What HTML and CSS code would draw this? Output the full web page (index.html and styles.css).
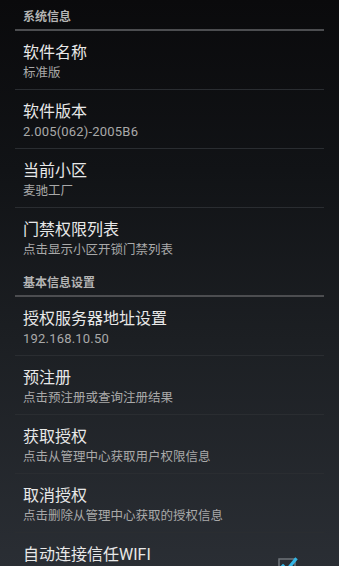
FILE: index.html
```html
<!DOCTYPE html>
<html lang="zh-CN">
<head>
<meta charset="utf-8">
<title>设置</title>
<link rel="stylesheet" href="styles.css">
</head>
<body>
<div class="screen">
  <div class="list">
    <div class="header">系统信息</div>
    <div class="item">
      <div class="title">软件名称</div>
      <div class="summary">标准版</div>
    </div>
    <div class="item">
      <div class="title">软件版本</div>
      <div class="summary latin">2.005(062)-2005B6</div>
    </div>
    <div class="item">
      <div class="title">当前小区</div>
      <div class="summary">麦驰工厂</div>
    </div>
    <div class="item last">
      <div class="title">门禁权限列表</div>
      <div class="summary">点击显示小区开锁门禁列表</div>
    </div>
    <div class="header">基本信息设置</div>
    <div class="item">
      <div class="title">授权服务器地址设置</div>
      <div class="summary latin">192.168.10.50</div>
    </div>
    <div class="item">
      <div class="title">预注册</div>
      <div class="summary">点击预注册或查询注册结果</div>
    </div>
    <div class="item">
      <div class="title">获取授权</div>
      <div class="summary">点击从管理中心获取用户权限信息</div>
    </div>
    <div class="item">
      <div class="title">取消授权</div>
      <div class="summary">点击删除从管理中心获取的授权信息</div>
    </div>
    <div class="item check-item">
      <div class="title">自动连接信任WIFI</div>
      <svg class="checkbox" width="32" height="32" viewBox="0 0 32 32" aria-hidden="true">
        <rect x="5" y="9" width="16" height="16" fill="none" stroke="#6f7479" stroke-width="1.5"/>
        <path d="M9 16 L13 20 L21.5 9.5" fill="none" stroke="#33b5e5" stroke-width="3.2" stroke-linecap="square"/>
      </svg>
    </div>
  </div>
</div>
</body>
</html>
```

FILE: styles.css
```css
html, body {
  margin: 0;
  padding: 0;
}
body {
  width: 339px;
  height: 566px;
  overflow: hidden;
  font-family: Roboto, "Noto Sans CJK SC", "Noto Sans", sans-serif;
}
.screen {
  width: 339px;
  height: 566px;
  background: linear-gradient(180deg, #0a0a0c 0%, #111316 30%, #1c1f23 60%, #2a2e34 100%);
  overflow: hidden;
}
.list {
  margin: 0 15px;
}
.header {
  padding: 9px 8px 4px;
  height: 16px;
  line-height: 16px;
  font-size: 12px;
  font-weight: bold;
  color: #b4b4b4;
  border-bottom: 2px solid #4c4d50;
}
.item {
  padding: 11px 8px 7px;
  height: 40px;
  border-bottom: 1px solid #2a2d31;
}
.item.last {
  border-bottom: none;
}
.title {
  font-size: 16px;
  line-height: 22px;
  color: #e8e8e8;
  white-space: nowrap;
}
.summary {
  font-size: 12.5px;
  line-height: 18px;
  color: #a9a9a9;
  white-space: nowrap;
}
.summary.latin {
  font-size: 13px;
  letter-spacing: 0.2px;
}
.check-item {
  display: flex;
  align-items: flex-start;
  justify-content: space-between;
  padding-right: 18px;
}
.checkbox {
  display: block;
  margin-top: 6px;
}
```
